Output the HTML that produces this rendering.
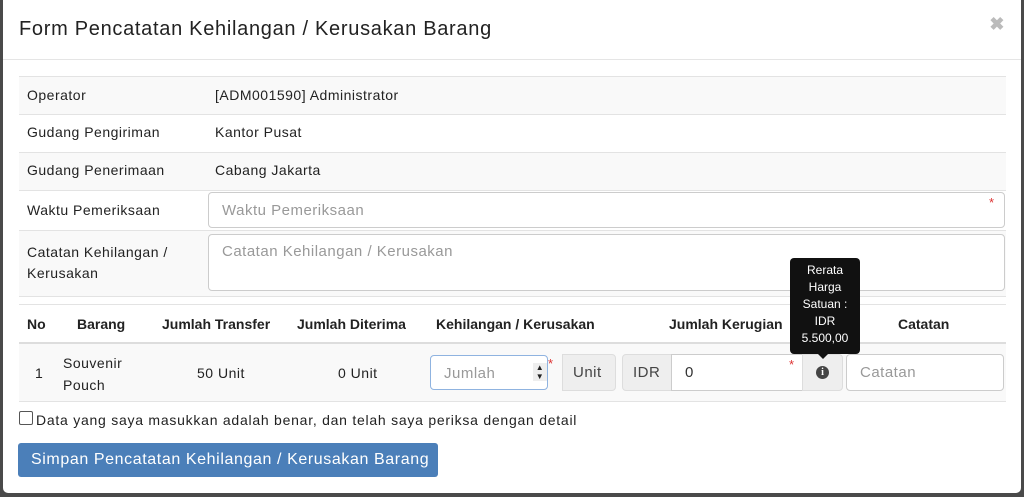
<!DOCTYPE html>
<html><head><meta charset="utf-8"><style>
*{box-sizing:border-box;margin:0;padding:0}
body{width:1024px;height:497px;background:#4a4a4a;font-family:"Liberation Sans",sans-serif;color:#222;font-size:14px;position:relative;overflow:hidden;letter-spacing:0.5px}
.modal{position:absolute;left:3px;top:0;width:1018px;height:493px;background:#fff;border-radius:0 0 5px 5px}
.a{position:absolute;white-space:nowrap}
.title{left:16px;top:18px;font-size:20px;color:#222;letter-spacing:0.7px}
.close{right:16px;top:14px;font-size:18px;color:#bbb;font-weight:bold}
.hr{left:0;width:1018px;height:1px;background:#e5e5e5;top:59px}
.row{left:16px;width:987px;border-top:1px solid #e3e3e3}
.g{background:#f9f9f9}
.lbl{left:24px}
.val{left:212px}
.inp{border:1px solid #ccc;border-radius:4px;background:#fff;color:#999;padding:0 13px;font-size:15px}
.star{color:#d33;font-size:13px}
.h{top:316px;font-weight:bold;font-size:14px;letter-spacing:0}
.btn{left:15px;top:443px;width:420px;height:34px;background:#4b7fb9;border-radius:3px;color:#fff;font-size:16px;padding:8px 0 0 13px;letter-spacing:0.6px}
</style></head><body>
<div class="modal">
<div class="a title">Form Pencatatan Kehilangan / Kerusakan Barang</div>
<div class="a close">✖</div>
<div class="a hr"></div>
<div class="a row g" style="top:76px;height:38px"></div>
<div class="a row" style="top:114px;height:38px"></div>
<div class="a row g" style="top:152px;height:38px"></div>
<div class="a row" style="top:190px;height:40px"></div>
<div class="a row g" style="top:230px;height:67px;border-bottom:1px solid #e3e3e3"></div>
<div class="a lbl" style="top:87px">Operator</div>
<div class="a val" style="top:87px">[ADM001590] Administrator</div>
<div class="a lbl" style="top:124px">Gudang Pengiriman</div>
<div class="a val" style="top:124px">Kantor Pusat</div>
<div class="a lbl" style="top:162px">Gudang Penerimaan</div>
<div class="a val" style="top:162px">Cabang Jakarta</div>
<div class="a lbl" style="top:202px">Waktu Pemeriksaan</div>
<div class="a inp" style="left:205px;top:192px;width:797px;height:36px;padding-top:9px">Waktu Pemeriksaan</div>
<div class="a star" style="left:986px;top:195px">*</div>
<div class="a lbl" style="top:242px;line-height:21px">Catatan Kehilangan /<br>Kerusakan</div>
<div class="a inp" style="left:205px;top:234px;width:797px;height:57px;padding-top:8px">Catatan Kehilangan / Kerusakan</div>
<div class="a row" style="top:304px;height:40px;border-bottom:2px solid #ddd"></div>
<div class="a row g" style="top:344px;height:58px;border-bottom:1px solid #e3e3e3;border-top:none"></div>
<div class="a h" style="left:24px">No</div>
<div class="a h" style="left:74px">Barang</div>
<div class="a h" style="left:159px">Jumlah Transfer</div>
<div class="a h" style="left:294px">Jumlah Diterima</div>
<div class="a h" style="left:433px">Kehilangan / Kerusakan</div>
<div class="a h" style="left:666px">Jumlah Kerugian</div>
<div class="a h" style="left:895px">Catatan</div>
<div class="a" style="left:32px;top:365px">1</div>
<div class="a" style="left:60px;top:352px;line-height:22px">Souvenir<br>Pouch</div>
<div class="a" style="left:194px;top:365px">50 Unit</div>
<div class="a" style="left:335px;top:365px">0 Unit</div>
<div class="a inp" style="left:427px;top:355px;width:118px;height:35px;border-color:#8fb3e0;padding-top:9px">Jumlah</div>
<div class="a" style="left:530px;top:363px;font-size:8px;line-height:9px;background:#eee;width:14px;text-align:center">▲<br>▼</div>
<div class="a star" style="left:545px;top:356px">*</div>
<div class="a" style="left:559px;top:354px;width:54px;height:37px;background:#eee;border:1px solid #ddd;border-radius:0 4px 4px 0;padding:9px 0 0 10px;color:#444;font-size:15px">Unit</div>
<div class="a" style="left:619px;top:354px;width:50px;height:37px;background:#eee;border:1px solid #ddd;border-radius:4px 0 0 4px;padding:9px 0 0 10px;color:#444;font-size:15px">IDR</div>
<div class="a inp" style="left:668px;top:354px;width:132px;height:37px;color:#333;padding-top:9px;border-radius:0">0</div>
<div class="a star" style="left:786px;top:357px">*</div>
<div class="a" style="left:799px;top:354px;width:41px;height:37px;background:#eee;border:1px solid #ddd;border-radius:0 4px 4px 0"></div>
<div class="a" style="left:813px;top:366px;width:13px;height:13px;border-radius:50%;background:#444;color:#fff;font-size:10px;font-weight:bold;text-align:center;line-height:13px;font-family:'Liberation Serif',serif;letter-spacing:0">i</div>
<div class="a inp" style="left:843px;top:354px;width:158px;height:37px;padding-top:9px">Catatan</div>
<div class="a" style="left:787px;top:258px;width:70px;height:96px;background:#111;border-radius:4px;color:#fff;font-size:12px;text-align:center;line-height:17px;padding-top:4px;letter-spacing:0">Rerata<br>Harga<br>Satuan :<br>IDR<br>5.500,00</div>
<div class="a" style="left:815px;top:354px;width:0;height:0;border-left:5px solid transparent;border-right:5px solid transparent;border-top:5px solid #111"></div>
<div class="a" style="left:16px;top:411px;width:14px;height:14px;border:1px solid #555;border-radius:2px"></div>
<div class="a" style="left:33px;top:412px;letter-spacing:0.75px">Data yang saya masukkan adalah benar, dan telah saya periksa dengan detail</div>
<div class="a btn">Simpan Pencatatan Kehilangan / Kerusakan Barang</div>
</div>
</body></html>
